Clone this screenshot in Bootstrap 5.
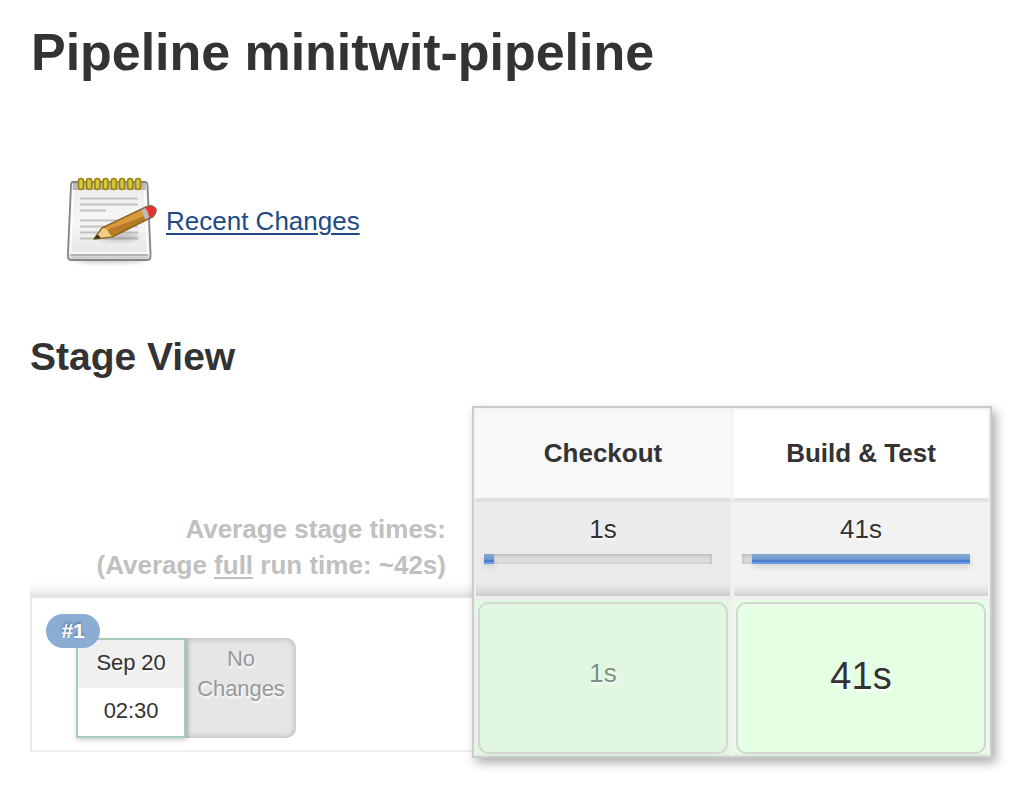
<!DOCTYPE html>
<html lang="en">
<head>
<meta charset="utf-8">
<title>Pipeline minitwit-pipeline</title>
<meta name="viewport" content="width=device-width, initial-scale=1">
<link rel="stylesheet" href="https://cdn.jsdelivr.net/npm/bootstrap@5.3.0/dist/css/bootstrap.min.css">
<style>
  body { font-family: "Liberation Sans", Arial, sans-serif; font-size: 26px; line-height: 36px; color: #333; background: #fff; }
  main { padding: 22px 44px 20px 30px; }
  h1 { font-size: 52px; font-weight: 700; line-height: 60px; letter-spacing: -.04px; margin: 0 0 91px 1px; }
  h2 { font-size: 39px; font-weight: 700; line-height: 46px; margin: 0; padding-top: 65px; }
  .changes-link { height: 96px; padding-left: 32px; gap: 8px; }
  .changes-link a { color: #204a87; text-decoration-thickness: 2px; text-underline-offset: 3px; margin-top: 0; }
  .stage-view { height: 352px; margin-top: 26px; }
  .runs-side { width: 442px; }
  .averages { height: 192px; padding: 105px 26px 0 0; border-bottom: 2px solid #e4e4e4; color: #c0c0c0; font-weight: 700; background: linear-gradient(to top, #e0e0e0, #f2f2f2 5px, #fff 14px) no-repeat; }
  .averages u { text-decoration-thickness: 2px; text-underline-offset: 3px; }
  .run-row { height: 154px; border: solid #e8e8e8; border-width: 0 0 2px 2px; border-bottom-color: #f0f0f0; padding: 40px 0 0 44px; font-size: 22px; letter-spacing: -.1px; }
  .run-date { width: 110px; height: 100px; border: 2px solid #a5cbb9; background: #fff; box-shadow: 1px 2px 5px rgba(0,0,0,.2); z-index: 1; }
  .run-date > div { height: 48px; line-height: 46px; text-shadow: 1px 2px 2px #fff; }
  .run-day { background: #efefef; }
  .run-number { left: -32px; top: -26px; width: 54px; height: 34px; border-radius: 17px; background: #8badd3; color: #fff; line-height: 33px; font-size: 21px; font-weight: 700; text-shadow: 0 -2px 3px rgba(0,0,0,.3); }
  .no-changes { width: 110px; height: 100px; background: #e6e6e6; border-radius: 0 10px 10px 0; color: #999; line-height: 30px; padding-top: 6px; text-shadow: 1px 2px 2px #fff; box-shadow: inset 0 0 6px rgba(0,0,0,.25); }
  .stages { width: 520px; border: 2px solid #ccc; box-shadow: 4px 5px 10px rgba(0,0,0,.32); background: #f2f2f2; }
  .stage { width: 258px; border: solid #f3f3f3; border-width: 0 2px; }
  .stage-name { height: 94px; border: solid #f5f5f5; border-width: 2px 2px 4px; margin: 0 -2px; border-bottom-color: #e4e4e4; background: #fff; font-weight: 700; line-height: 86px; }
  .stage-time { height: 94px; padding: 9px 8px 0; background: linear-gradient(to top, #d0d0d0, #e3e3e3 5px, #f2f2f2 12px); text-shadow: 1px 2px 2px #fff; }
  .meter { width: 228px; height: 10px; margin-top: 7px; background: #dedede; box-shadow: inset 0 1px 4px rgba(0,0,0,.22); }
  .meter-value { height: 10px; background: linear-gradient(#87a9ce 0, #709bd0 5px, #4578d0 7px, #4578d0 8px, #6a9ce4 8px); box-shadow: 0 3px 6px rgba(0,0,0,.13); }
  .result-cell { height: 156px; margin-top: 4px; padding: 2px; background: #e5ffe5; border-bottom: 2px solid #d8efd8; }
  .result { height: 152px; border: 2px solid #d5d5d5; border-radius: 10px; background: #e5ffe5; text-shadow: 1px 2px 2px #fff; }
  .checkout { background: #ededed; border-color: #eee; }
  .checkout .stage-name { background: #f8f8f8; border-bottom-color: #dfdfdf; }
  .checkout .stage-time { background: linear-gradient(to top, #cacaca, #dcdcdc 5px, #ebebeb 12px); }
  .checkout .result-cell, .checkout .result { background: #e0f8e0; }
  .checkout .result { color: #829282; padding-bottom: 10px; }
  .build .result { font-size: 38px; padding-bottom: 4px; }
</style>
</head>
<body>
<main>
  <h1>Pipeline minitwit-pipeline</h1>
  <div class="changes-link d-flex align-items-center">
    <svg width="96" height="96" viewBox="0 0 96 96" aria-hidden="true">
      <defs>
        <linearGradient id="paper" x2="0" y2="1"><stop stop-color="#ececeb"/><stop offset=".5" stop-color="#f6f6f6"/><stop offset="1" stop-color="#e4e4e2"/></linearGradient>
        <linearGradient id="wood" x1=".3" y1=".3" x2=".65" y2=".8"><stop stop-color="#d9a13d"/><stop offset=".48" stop-color="#d9983b"/><stop offset=".5" stop-color="#b57a27"/><stop offset="1" stop-color="#be8028"/></linearGradient>
        <filter id="soft" x="-20%" y="-50%" width="140%" height="200%"><feGaussianBlur stdDeviation="2"/></filter>
      </defs>
      <ellipse cx="48" cy="87" rx="36" ry="3.500" fill="#888" opacity=".4" filter="url(#soft)"/>
      <path d="M11 9H83Q85 9 85.500 12L88.500 79V84Q88.500 87 84 87H10Q6 87 6 84V79L9 12Q9 9 11 9Z" fill="url(#paper)" stroke="#858681" stroke-width="1.800"/>
      <path d="M11.500 14H82.500L86 80H8.500Z" fill="none" stroke="#fff" stroke-width="1.500"/>
      <path d="M11 10H83.500L84 17H10.500Z" fill="#aaa" opacity=".8"/>
      <path d="M8.500 81H86V83H8.500Z" fill="#b4b4b1"/><path d="M8.500 84.500H86" stroke="#cacac7" stroke-width="2"/>
      <path d="M18 25.500H76M18 31.500H76M18 37.500H44M18 47.500H76M18 53.500H76M18 59.500H76M18 65.500H76" stroke="#c2c2c2" stroke-width="2"/>
      <g fill="#d9c63b" stroke="#978408" stroke-width="1.600">
        <rect x="16.500" y="5.500" width="5" height="11" rx="2.500"/><rect x="24.700" y="5.500" width="5" height="11" rx="2.500"/><rect x="32.900" y="5.500" width="5" height="11" rx="2.500"/><rect x="41.100" y="5.500" width="5" height="11" rx="2.500"/><rect x="49.300" y="5.500" width="5" height="11" rx="2.500"/><rect x="57.500" y="5.500" width="5" height="11" rx="2.500"/><rect x="65.700" y="5.500" width="5" height="11" rx="2.500"/><rect x="73.500" y="5.500" width="5" height="11" rx="2.500"/>
      </g>
      <ellipse cx="57" cy="64" rx="20" ry="4" fill="#777" opacity=".38" filter="url(#soft)"/>
      <path d="M32 66L40 55L83 34.500Q89 31.500 92.500 34.500T91 43.500L50 64Z" fill="url(#wood)" stroke="#916426" stroke-width="1.500" stroke-linejoin="round"/>
      <path d="M33 65.500L40.500 55.500Q45 55 46 58T50 63.200Z" fill="#edcf86"/>
      <path d="M32 66L35.500 61.500L39 65Z" fill="#382b19"/>
      <path d="M79 36.500L83 34.500L87.500 45L83.500 47Z" fill="#bcbcc8"/>
      <path d="M83 34.500Q89 31.500 92.500 34.500T91 43.500L87.500 45Q87 38 83 34.500Z" fill="#ef2935"/>
      <path d="M79 36.500L83 34.500Q89 31.500 92.500 34.500T91 43.500L83.500 47" fill="none" stroke="#8f6149" stroke-width="1.300"/>
    </svg>
    <a href="#">Recent Changes</a>
  </div>
  <h2>Stage View</h2>
  <div class="stage-view d-flex">
    <div class="runs-side flex-shrink-0">
      <div class="averages text-end">Average stage times:<br>(Average <u>full</u> run time: ~42s)</div>
      <div class="run-row d-flex text-center">
        <div class="run-date position-relative flex-shrink-0">
          <div class="run-day">Sep 20</div>
          <div>02:30</div>
          <span class="run-number position-absolute">#1</span>
        </div>
        <div class="no-changes">No<br>Changes</div>
      </div>
    </div>
    <div class="stages d-flex flex-shrink-0 text-center position-relative">
      <section class="stage checkout">
        <div class="stage-name">Checkout</div>
        <div class="stage-time">1s<div class="meter d-flex"><div class="meter-value" style="width:10px"></div></div></div>
        <div class="result-cell"><div class="result d-flex align-items-center justify-content-center">1s</div></div>
      </section>
      <section class="stage build">
        <div class="stage-name">Build &amp; Test</div>
        <div class="stage-time">41s<div class="meter d-flex justify-content-end"><div class="meter-value" style="width:218px"></div></div></div>
        <div class="result-cell"><div class="result d-flex align-items-center justify-content-center">41s</div></div>
      </section>
    </div>
  </div>
</main>
<script src="https://cdn.jsdelivr.net/npm/bootstrap@5.3.0/dist/js/bootstrap.bundle.min.js"></script>
</body>
</html>
